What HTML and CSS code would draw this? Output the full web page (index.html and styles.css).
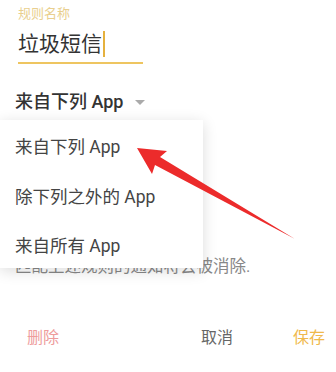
FILE: index.html
```html
<!DOCTYPE html>
<html lang="zh-CN">
<head>
    <meta charset="utf-8">
    <meta name="viewport" content="width=device-width, initial-scale=1">
    <title>规则编辑</title>
    <link rel="stylesheet" href="styles.css">
</head>
<body>
    <div class="page">
        <div class="field">
            <div class="field-label">规则名称</div>
            <div class="field-input">垃圾短信<span class="cursor"></span></div>
        </div>

        <div class="select">
            <span class="select-value">来自下列 App</span>
            <span class="select-caret"></span>
        </div>

        <p class="hint">匹配上述规则的通知将会被消除.</p>

        <footer class="actions">
            <span class="btn btn-delete">删除</span>
            <span class="spacer"></span>
            <span class="btn btn-cancel">取消</span>
            <span class="btn btn-save">保存</span>
        </footer>

        <!-- dropdown overlay -->
        <ul class="menu">
            <li class="menu-item">来自下列 App</li>
            <li class="menu-item">除下列之外的 App</li>
            <li class="menu-item">来自所有 App</li>
        </ul>

        <!-- red annotation arrow -->
        <svg class="arrow" width="336" height="372" viewBox="0 0 336 372">
            <polygon points="137,148 167,151 160,157 295,239 155,165 152,174" fill="#ec2b2b"/>
        </svg>
    </div>
</body>
</html>
```

FILE: styles.css
```css
* { box-sizing: border-box; margin: 0; padding: 0; }
body { background: #fff; font-family: Roboto, "Noto Sans CJK SC", sans-serif; color: #333; }
.page { position: relative; width: 336px; height: 372px; overflow: hidden; }

.field { padding: 5px 0 0 18px; }
.field-label { font-size: 13px; line-height: 18px; color: #e9cf8e; }
.field-input { width: 125px; font-size: 21px; line-height: 30px; margin-top: 6px; padding-bottom: 3px; border-bottom: 2px solid #eec560; color: #333; display: flex; align-items: center; }
.cursor { display: inline-block; width: 2px; height: 26px; background: #e5b13e; margin-left: 1px; }

.select { display: flex; align-items: center; padding: 26px 0 0 15px; }
.select-value { font-size: 18px; line-height: 24px; font-weight: 500; color: #333; }
.select-caret { width: 0; height: 0; margin-left: 11px; border-left: 5px solid transparent; border-right: 5px solid transparent; border-top: 5px solid #aaa; }

.hint { padding: 142px 0 0 15px; font-size: 16.5px; line-height: 22px; color: #888; white-space: nowrap; }

.actions { display: flex; align-items: center; padding: 49px 11px 0 27px; }
.btn { font-size: 16px; line-height: 22px; }
.spacer { flex: 1; }
.btn-delete { color: #ee9c9c; }
.btn-cancel { color: #666; margin-right: 60px; }
.btn-save { color: #f0b94c; }

.menu { position: absolute; left: 0; top: 120px; width: 203px; height: 148px; list-style: none; background: #fff; box-shadow: 0 3px 14px rgba(0, 0, 0, 0.14); padding-top: 3px; }
.menu-item { height: 49.5px; line-height: 49.5px; padding-left: 15px; font-size: 17.5px; color: #444; }

.arrow { position: absolute; left: 0; top: 0; pointer-events: none; }
```
